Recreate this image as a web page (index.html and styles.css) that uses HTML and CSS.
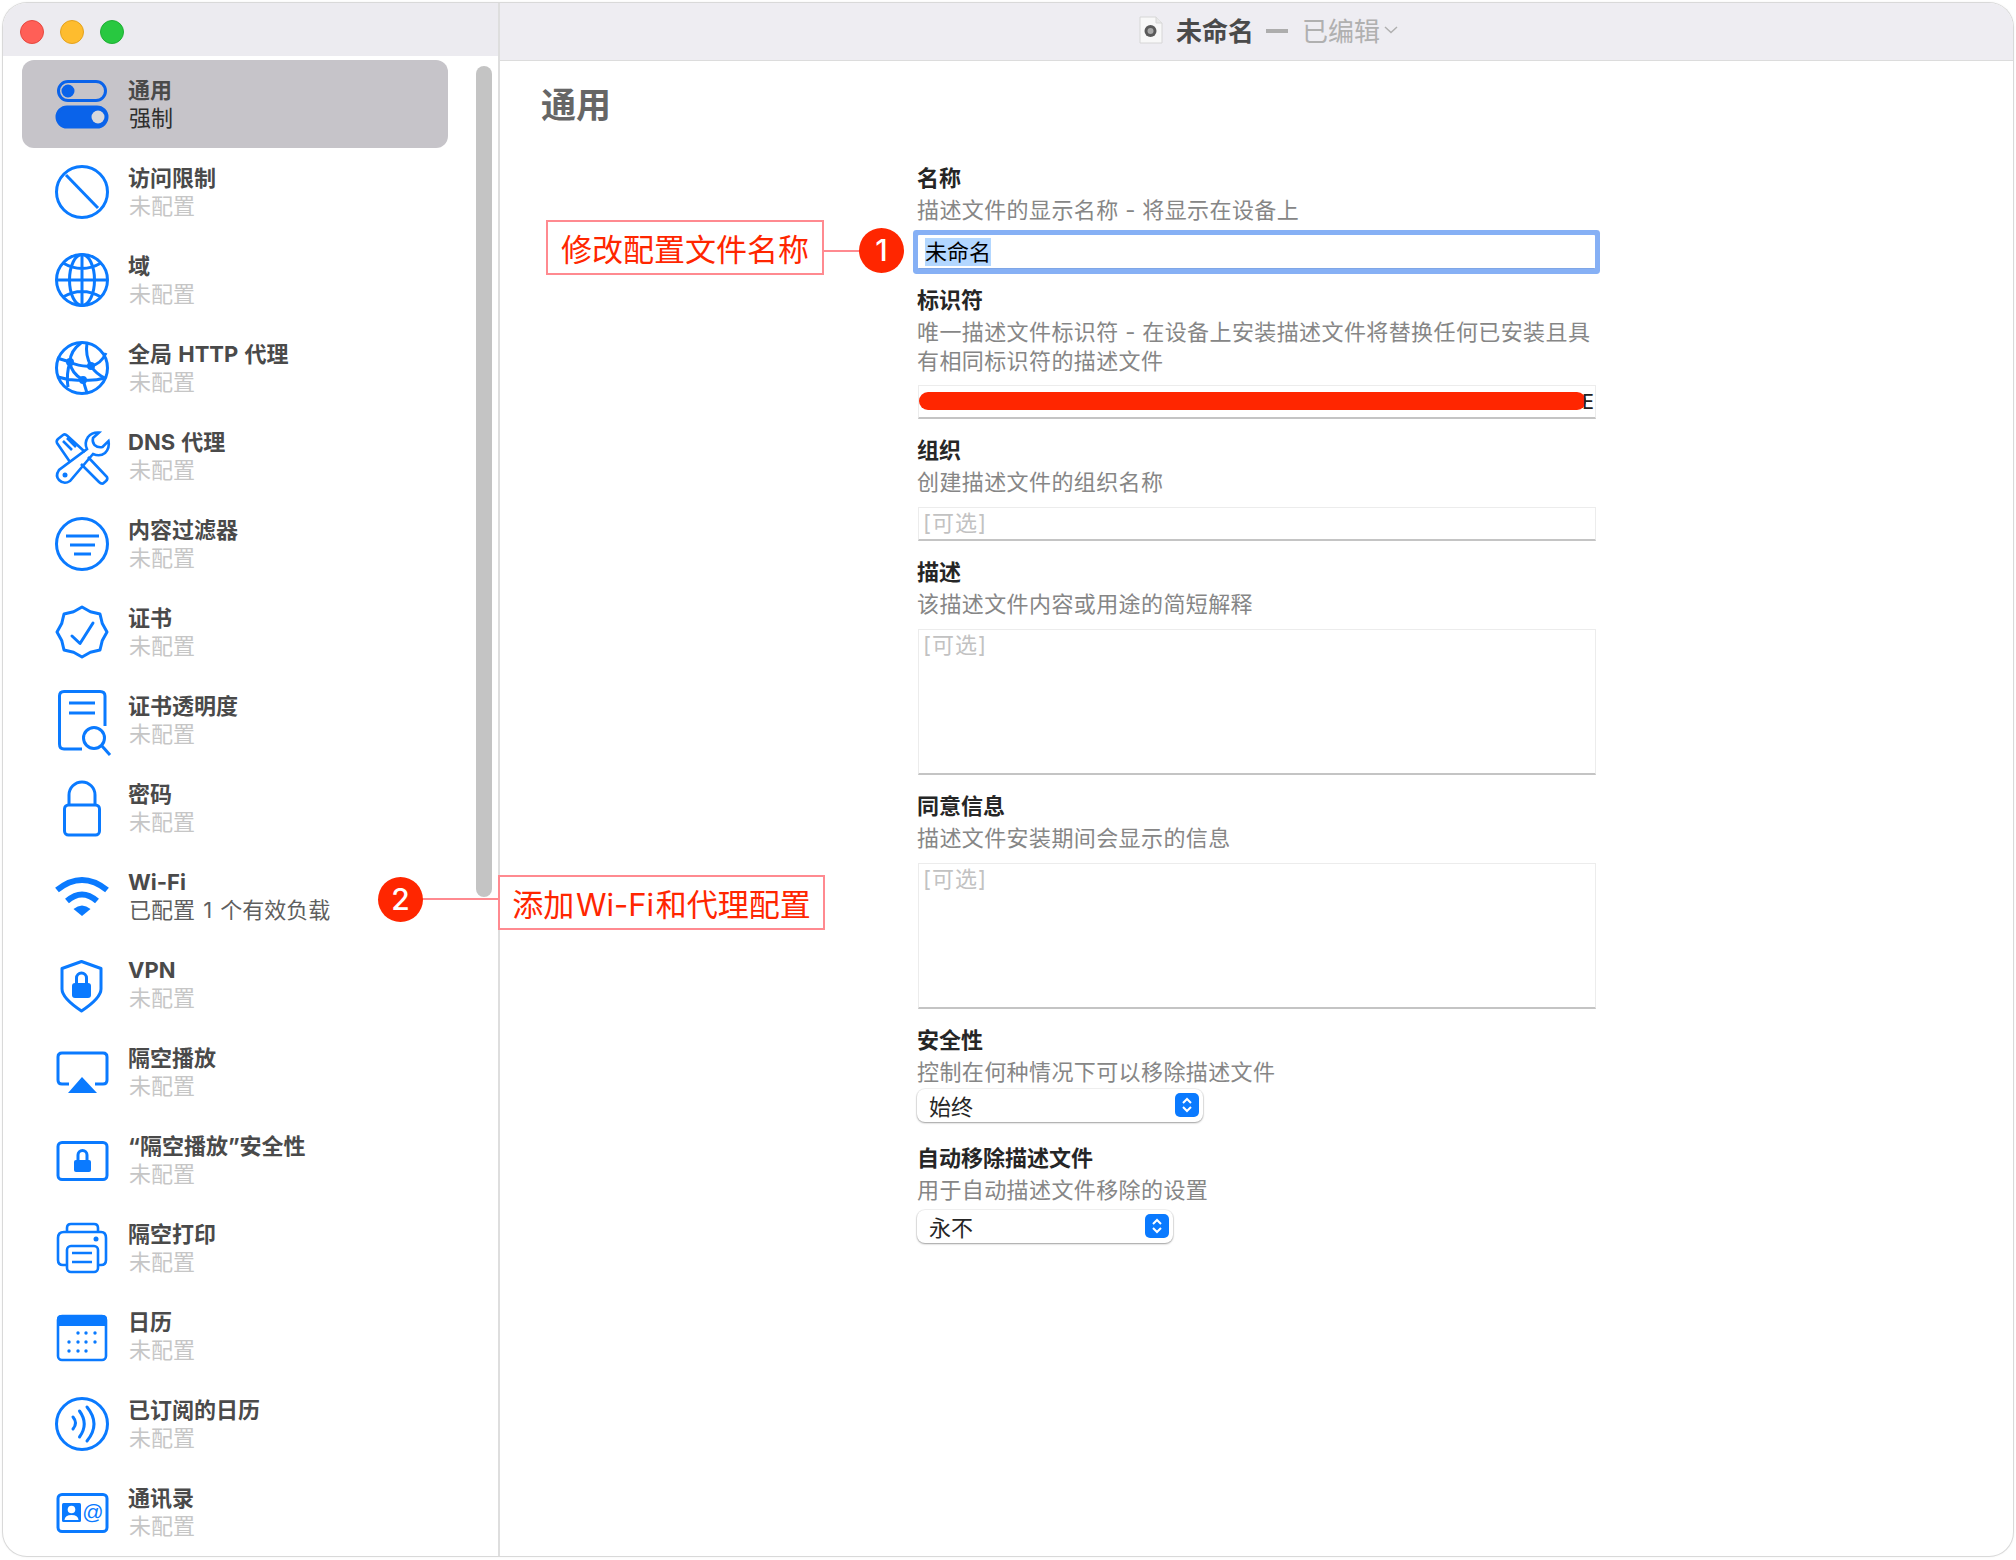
FILE: index.html
```html
<!DOCTYPE html>
<html lang="zh-CN">
<head>
  <meta charset="UTF-8">
  <title>未命名</title>
  <link rel="stylesheet" href="styles.css">
</head>
<body>

  <div class="window">
    <aside class="sidebar">
      <div class="side-title">
        <span class="light red"></span>
        <span class="light yellow"></span>
        <span class="light green"></span>
      </div>
      <div class="side-body">
        <ul class="list">
          <li class="item selected">
            <svg class="icon toggles" viewBox="0 0 60 60"><rect x="6.5" y="7.5" width="47" height="19" rx="9.5"/><circle class="solid" cx="16" cy="17" r="5"/><rect class="solid" x="5" y="33" width="50" height="20" rx="10"/><circle class="knob" cx="46" cy="43" r="6.500"/></svg>
            <div class="item-text"><div class="item-name">通用</div><div class="item-sub forced">强制</div></div>
          </li>
          <li class="item">
            <svg class="icon" viewBox="0 0 60 60"><circle cx="30" cy="30" r="25.5"/><path d="M14 13 46 46"/></svg>
            <div class="item-text"><div class="item-name">访问限制</div><div class="item-sub">未配置</div></div>
          </li>
          <li class="item">
            <svg class="icon" viewBox="0 0 60 60"><circle cx="30" cy="30" r="25.5"/><ellipse cx="30" cy="30" rx="12.5" ry="25.5"/><path d="M30 4.500V55.500M4.500 30H55.500M11 13Q30 24 49 13M11 47Q30 36 49 47"/></svg>
            <div class="item-text"><div class="item-name">域</div><div class="item-sub">未配置</div></div>
          </li>
          <li class="item">
            <svg class="icon" viewBox="0 0 60 60"><circle cx="30" cy="30" r="25.500"/><path d="M29 5Q18 13 18 24Q19 35 31 42L35 55M35 5Q33 17 39 28Q44 36 53 40M5 20 18 24Q28 29 39 28Q49 26 54 15M6 39Q18 43 31 42Q42 43 53 40M18 24Q14 36 16 49"/><circle class="solid" cx="18" cy="24" r="2.500"/><circle class="solid" cx="39" cy="28" r="2.500"/><circle class="solid" cx="31" cy="42" r="2.500"/></svg>
            <div class="item-text"><div class="item-name">全局 HTTP 代理</div><div class="item-sub">未配置</div></div>
          </li>
          <li class="item">
            <svg class="icon thin" viewBox="0 0 60 60"><path d="M18 36 5 17Q4 15 6 13L11 9Q13 7.500 15 9.500L33 26M36 31 55 51Q56 53 54 55L51 57.500Q49 58 47 56L29 38"/><path d="M11 15 20 24M15 12 24 21"/><path d="M47 6.500Q40 6 36 11Q32 17 35 23L7 44Q3 50 7 54Q12 59 18 55L41 28Q48 31 53 27Q58 22 56.500 15L50.500 21Q46 22 42.500 19Q40 16 41 12Z"/><circle class="solid nostroke" cx="13" cy="49" r="2.500"/></svg>
            <div class="item-text"><div class="item-name">DNS 代理</div><div class="item-sub">未配置</div></div>
          </li>
          <li class="item">
            <svg class="icon" viewBox="0 0 60 60"><circle cx="30" cy="30" r="25.500"/><path d="M14 22H47M18 31H43M22 40H39"/></svg>
            <div class="item-text"><div class="item-name">内容过滤器</div><div class="item-sub">未配置</div></div>
          </li>
          <li class="item">
            <svg class="icon" viewBox="0 0 60 60"><path class="round" d="M30 5 38.400 9.700 48 12 50.300 21.600 55 30 50.300 38.400 48 48 38.400 50.300 30 55 21.600 50.300 12 48 9.700 38.400 5 30 9.700 21.600 12 12 21.600 9.700Z"/><path class="round" d="M20 34 28 41.500 41 21"/></svg>
            <div class="item-text"><div class="item-name">证书</div><div class="item-sub">未配置</div></div>
          </li>
          <li class="item">
            <svg class="icon" viewBox="0 0 60 60"><path d="M53 36V6Q53 1.500 48 1.500H12Q7.500 1.500 7.500 6V54Q7.500 59 12 59H30"/><path d="M17 13H43M17 23H43"/><circle cx="42" cy="48" r="10.500"/><path d="M50 56 58 65"/></svg>
            <div class="item-text"><div class="item-name">证书透明度</div><div class="item-sub">未配置</div></div>
          </li>
          <li class="item">
            <svg class="icon" viewBox="0 0 60 60"><path d="M17 27V17A13 13 0 0 1 43 17V27"/><rect x="12.500" y="27" width="35" height="30" rx="4"/></svg>
            <div class="item-text"><div class="item-name">密码</div><div class="item-sub">未配置</div></div>
          </li>
          <li class="item">
            <svg class="icon wifi" viewBox="0 0 60 60"><path d="M5 24Q30 4 55 24M15 35Q30 22 45 35"/><path class="solid nostroke" d="M30 50 21.500 43Q30 36 38.500 43Z"/></svg>
            <div class="item-text"><div class="item-name">Wi-Fi</div><div class="item-sub on">已配置 1 个有效负载</div></div>
          </li>
          <li class="item">
            <svg class="icon" viewBox="0 0 60 60"><path class="round" d="M29.500 7.500 49 14.500V35Q49 44 29.500 57Q10 44 10 35V14.500Z"/><path d="M24.500 30V24A5 5 0 0 1 34.500 24V30"/><rect class="solid nostroke" x="20" y="29" width="19" height="15" rx="3"/></svg>
            <div class="item-text"><div class="item-name">VPN</div><div class="item-sub">未配置</div></div>
          </li>
          <li class="item">
            <svg class="icon" viewBox="0 0 60 60"><path d="M17 42H10Q6 42 6 38V15Q6 11 10 11H51Q55 11 55 15V38Q55 42 51 42H43"/><path class="solid nostroke" d="M30 35 45 51H16Z"/></svg>
            <div class="item-text"><div class="item-name">隔空播放</div><div class="item-sub">未配置</div></div>
          </li>
          <li class="item">
            <svg class="icon" viewBox="0 0 60 60"><rect x="6" y="12.500" width="49" height="37" rx="4"/><path d="M26 31V25A4.500 4.500 0 0 1 35 25V31"/><rect class="solid nostroke" x="22" y="30" width="17" height="12" rx="2"/></svg>
            <div class="item-text"><div class="item-name">“隔空播放”安全性</div><div class="item-sub">未配置</div></div>
          </li>
          <li class="item">
            <svg class="icon thin" viewBox="0 0 60 60"><path d="M15 14V10Q15 6 19 6H42Q46 6 46 10V14"/><path d="M14 47H11Q6 47 6 42V20Q6 14 12 14H49Q54 14 54 20V42Q54 47 49 47H46"/><rect x="15" y="28" width="31" height="26" rx="4"/><path d="M20 35H40M20 44H40"/><circle class="solid nostroke" cx="44" cy="21" r="2.500"/></svg>
            <div class="item-text"><div class="item-name">隔空打印</div><div class="item-sub">未配置</div></div>
          </li>
          <li class="item">
            <svg class="icon thin" viewBox="0 0 60 60"><rect x="6" y="10" width="48" height="44" rx="4"/><path class="solid nostroke" d="M5 20V13Q5 9 9 9H51Q55 9 55 13V20Z"/><g class="solid nostroke"><circle cx="26" cy="27" r="1.700"/><circle cx="34" cy="27" r="1.700"/><circle cx="43" cy="27" r="1.700"/><circle cx="17" cy="36" r="1.700"/><circle cx="26" cy="36" r="1.700"/><circle cx="34" cy="36" r="1.700"/><circle cx="43" cy="36" r="1.700"/><circle cx="17" cy="45" r="1.700"/><circle cx="26" cy="45" r="1.700"/><circle cx="34" cy="45" r="1.700"/></g></svg>
            <div class="item-text"><div class="item-name">日历</div><div class="item-sub">未配置</div></div>
          </li>
          <li class="item">
            <svg class="icon" viewBox="0 0 60 60"><circle cx="30" cy="30" r="25.500"/><path class="round" d="M21 23Q26 29 21 35M27.500 17Q37 30 27.500 43M35 13Q49 30 35 47"/></svg>
            <div class="item-text"><div class="item-name">已订阅的日历</div><div class="item-sub">未配置</div></div>
          </li>
          <li class="item">
            <svg class="icon" viewBox="0 0 60 60"><rect x="6" y="12.500" width="49" height="37" rx="4"/><rect class="solid nostroke" x="10" y="21" width="19" height="19" rx="1.500"/><circle class="cut" cx="19.500" cy="27.500" r="3.800"/><path class="cut" d="M12.500 38Q13 33 19.500 33Q26 33 26.500 38Z"/><text class="at" x="41" y="37">@</text></svg>
            <div class="item-text"><div class="item-name">通讯录</div><div class="item-sub">未配置</div></div>
          </li>
        </ul>
        <div class="scrollbar"></div>
      </div>
    </aside>

    <main class="main">
      <header class="main-title">
        <svg class="doc" viewBox="0 0 24 28"><path d="M1 1H17L23 7V27H1Z" fill="#f8f8f8" stroke="#d6d6d6"/><path d="M17 1V7H23" fill="#e8e8e8" stroke="#d6d6d6"/><circle cx="11.500" cy="15" r="6" fill="#5a5a5a"/><circle cx="11.500" cy="15" r="3" fill="#a8a8a8"/></svg>
        <span class="doc-name">未命名</span>
        <span class="doc-dash"></span>
        <span class="doc-state">已编辑</span>
        <svg class="doc-chevron" viewBox="0 0 14 8"><path d="M1 1 7 6.500 13 1"/></svg>
      </header>

      <div class="content">
        <h1>通用</h1>
        <div class="form">
          <div class="field">
            <div class="label">名称</div>
            <div class="desc">描述文件的显示名称 - 将显示在设备上</div>
            <div class="input focused"><span class="selected-text">未命名</span></div>
          </div>
          <div class="field">
            <div class="label">标识符</div>
            <div class="desc">唯一描述文件标识符 - 在设备上安装描述文件将替换任何已安装且具有相同标识符的描述文件</div>
            <div class="input masked"><span class="mask"></span><span class="tail">E</span></div>
          </div>
          <div class="field">
            <div class="label">组织</div>
            <div class="desc">创建描述文件的组织名称</div>
            <div class="input optional">[可选]</div>
          </div>
          <div class="field">
            <div class="label">描述</div>
            <div class="desc">该描述文件内容或用途的简短解释</div>
            <div class="input optional area">[可选]</div>
          </div>
          <div class="field">
            <div class="label">同意信息</div>
            <div class="desc">描述文件安装期间会显示的信息</div>
            <div class="input optional area">[可选]</div>
          </div>
          <div class="field wide-field">
            <div class="label">安全性</div>
            <div class="desc">控制在何种情况下可以移除描述文件</div>
            <div class="select wide">始终
              <svg class="select-btn" viewBox="0 0 24 24"><rect width="24" height="24" rx="5"/><path d="M8 10 12 6 16 10M8 14 12 18 16 14"/></svg>
            </div>
          </div>
          <div class="field">
            <div class="label">自动移除描述文件</div>
            <div class="desc">用于自动描述文件移除的设置</div>
            <div class="select">永不
              <svg class="select-btn" viewBox="0 0 24 24"><rect width="24" height="24" rx="5"/><path d="M8 10 12 6 16 10M8 14 12 18 16 14"/></svg>
            </div>
          </div>
        </div>
      </div>
    </main>

    <!-- red notes drawn over the window -->
    <div class="note note-name">修改配置文件名称</div>
    <div class="note-line line-name"></div>
    <div class="badge badge-name">1</div>
    <div class="note note-wifi">添加 Wi-Fi 和代理配置</div>
    <div class="note-line line-wifi"></div>
    <div class="badge badge-wifi">2</div>
  </div>

</body>
</html>
```

FILE: styles.css
```css
* {
  box-sizing: border-box;
}
body {
  margin: 0;
  padding: 3px;
  background: #fff;
  font-family: Inter, "Noto Sans CJK SC", sans-serif;
}
.window {
  position: relative;
  display: flex;
  width: 2010px;
  height: 1553px;
  border-radius: 24px;
  overflow: hidden;
  background: #fff;
  box-shadow: 0 0 0 1px #d9d9d9, 0 0 3px rgba(0, 0, 0, 0.12);
}

/* sidebar */
.sidebar {
  width: 497px;
  flex: none;
  border-right: 2px solid #dedede;
}
.side-title {
  display: flex;
  align-items: center;
  gap: 16px;
  height: 53px;
  padding: 4px 0 0 17px;
  background: #ecebf0;
}
.light {
  width: 24px;
  height: 24px;
  border-radius: 50%;
}
.red {
  background: #ff5f57;
  border: 1px solid #e5483f;
}
.yellow {
  background: #febc2e;
  border: 1px solid #e3a21f;
}
.green {
  background: #28c840;
  border: 1px solid #1fae34;
}
.side-body {
  display: flex;
}
.list {
  width: 473px;
  flex: none;
  margin: 0;
  padding: 4px 0 0 19px;
  list-style: none;
}
.item {
  display: flex;
  align-items: center;
  gap: 17px;
  width: 426px;
  height: 88px;
  padding-left: 30px;
  border-radius: 12px;
}
.item.selected {
  background: #c6c4c9;
}
.item-name {
  margin-left: -1px;
  font-size: 22px;
  line-height: 28px;
  font-weight: 700;
  word-spacing: 1px;
  color: #4a4a4a;
}
.item-sub {
  font-size: 22px;
  line-height: 28px;
  color: #c6c6c6;
}
.item-sub.on {
  word-spacing: 2px;
  color: #5f5f5f;
}
.item-sub.forced {
  color: #2e2e2e;
}
.scrollbar {
  width: 16px;
  height: 831px;
  margin-top: 10px;
  border-radius: 8px;
  background: #c4c4c4;
}

/* icons */
.icon {
  width: 60px;
  height: 60px;
  flex: none;
  overflow: visible;
  fill: none;
  stroke: #0a7aff;
  stroke-width: 3;
}
.icon.thin {
  stroke-width: 2.6;
}
.icon.wifi {
  stroke-width: 6;
}
.icon .solid {
  fill: #0a7aff;
}
.icon .nostroke {
  stroke: none;
}
.icon .round {
  stroke-linejoin: round;
  stroke-linecap: round;
}
.icon .cut {
  fill: #fff;
  stroke: none;
}
.icon .at {
  fill: #0a7aff;
  stroke: none;
  font-family: "Liberation Sans", sans-serif;
  font-size: 21px;
  text-anchor: middle;
}
.toggles {
  stroke: #0a63ea;
}
.toggles .solid {
  fill: #0a63ea;
}
.toggles .knob {
  fill: #d8d8dc;
  stroke: none;
}

/* main side */
.main {
  flex: 1;
}
.main-title {
  display: flex;
  align-items: center;
  justify-content: center;
  height: 58px;
  padding: 0 0 4px 24px;
  background: #eeedf2;
  border-bottom: 1px solid #dcdcdc;
}
.doc {
  width: 24px;
  height: 28px;
  margin-right: 13px;
}
.doc-name {
  font-size: 26px;
  font-weight: 700;
  color: #4a4a4a;
}
.doc-dash {
  width: 22px;
  height: 4px;
  margin: 2px 14px 0 12px;
  background: #adadad;
}
.doc-state {
  font-size: 26px;
  color: #b0b0b0;
}
.doc-chevron {
  width: 14px;
  height: 8px;
  margin-left: 4px;
  fill: none;
  stroke: #b0b0b0;
  stroke-width: 1.5;
}
.content {
  padding-left: 41px;
}
h1 {
  margin: 22px 0 36px;
  font-size: 35px;
  line-height: 44px;
  font-weight: 700;
  color: #666;
}
.form {
  width: 679px;
  margin-left: 376px;
}
.field {
  margin-bottom: 16px;
}
.wide-field {
  margin-bottom: 21px;
}
.label {
  font-size: 22px;
  line-height: 30px;
  font-weight: 700;
  color: #262626;
}
.desc {
  margin-top: 3px;
  font-size: 22px;
  line-height: 29px;
  letter-spacing: 0.4px;
  color: #868686;
}
.input {
  position: relative;
  height: 34px;
  margin: 10px 0 0 1px;
  padding: 0 4px;
  font-size: 22px;
  line-height: 30px;
  color: #000;
  background: #fff;
  border: 1px solid #ececec;
  border-bottom: 2px solid #c4c4c4;
  overflow: hidden;
}
.input.focused {
  margin-right: 1px;
  overflow: visible;
  border: none;
  border-bottom: 1px solid #7fa6e6;
  box-shadow: 0 0 0 5px #86b0f5;
  border-radius: 1px;
  padding: 3px 7px;
  line-height: 28px;
}
.selected-text {
  display: inline-block;
  background: #b3d7ff;
}
.input.masked {
  margin-top: 9px;
}
.mask {
  position: absolute;
  top: 6px;
  left: 0;
  width: 667px;
  height: 18px;
  border-radius: 9px;
  background: #ff2600;
}
.tail {
  position: absolute;
  top: 1px;
  right: 1px;
  color: #222;
  font-size: 20px;
}
.input.optional {
  letter-spacing: 1px;
  color: #c2c2c2;
}
.input.area {
  height: 146px;
}
.select {
  position: relative;
  display: flex;
  align-items: center;
  width: 256px;
  height: 33px;
  margin-top: 5px;
  padding: 0 0 2px 12px;
  font-size: 22px;
  color: #262626;
  border-radius: 8px;
  background: #fff;
  box-shadow: 0 0 0 1px rgba(0, 0, 0, 0.05), 0 1px 2px rgba(0, 0, 0, 0.35);
}
.select.wide {
  width: 286px;
  margin-top: 2px;
}
.select-btn {
  position: absolute;
  top: 4px;
  right: 4px;
  width: 24px;
  height: 24px;
  fill: #0a7aff;
}
.select-btn path {
  fill: none;
  stroke: #fff;
  stroke-width: 2;
}

/* red annotations */
.note {
  position: absolute;
  display: flex;
  align-items: center;
  justify-content: center;
  height: 55px;
  font-size: 31px;
  color: #ff2600;
  background: #fff;
  border: 2px solid #ff8a90;
}
.note-name {
  top: 217px;
  left: 543px;
  width: 278px;
}
.note-wifi {
  top: 872px;
  left: 495px;
  width: 327px;
  word-spacing: -7px;
}
.note-line {
  position: absolute;
  height: 2px;
  background: #ff8a90;
}
.line-name {
  top: 247px;
  left: 821px;
  width: 40px;
}
.line-wifi {
  top: 895px;
  left: 417px;
  width: 78px;
}
.badge {
  position: absolute;
  width: 45px;
  height: 45px;
  border-radius: 50%;
  background: #ff2600;
  color: #fff;
  font-size: 30px;
  font-weight: 500;
  line-height: 45px;
  text-align: center;
}
.badge-name {
  top: 225px;
  left: 856px;
}
.badge-wifi {
  top: 874px;
  left: 375px;
}
```
